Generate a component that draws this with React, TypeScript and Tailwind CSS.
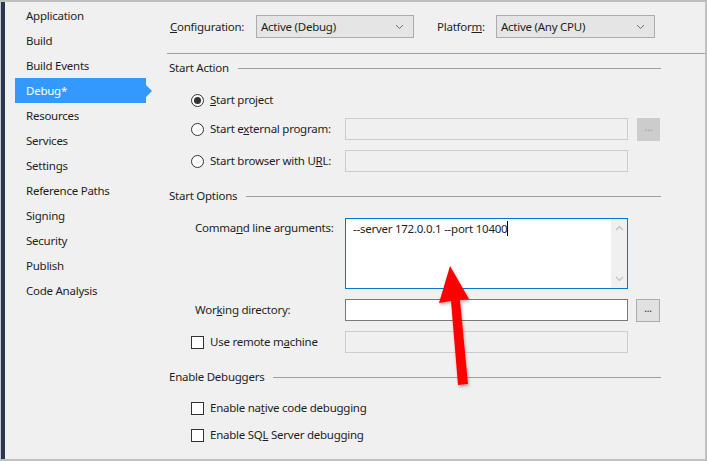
import React from 'react';

const navItems = [
  'Application',
  'Build',
  'Build Events',
  'Debug*',
  'Resources',
  'Services',
  'Settings',
  'Reference Paths',
  'Signing',
  'Security',
  'Publish',
  'Code Analysis',
];

const Radio = ({ checked }: { checked?: boolean }) => (
  <span className="w-[13px] h-[13px] rounded-full border border-[#333333] bg-white flex items-center justify-center shrink-0">
    {checked && <span className="w-[7px] h-[7px] rounded-full bg-[#333333]" />}
  </span>
);

const Checkbox = () => <span className="w-[13px] h-[13px] border border-[#333333] bg-white shrink-0" />;

const Dropdown = ({ value, width }: { value: string; width: string }) => (
  <div className={`${width} h-[23px] bg-[#e5e5e5] border border-[#acacac] flex items-center pl-[4px] pr-[9px]`}>
    <span className="flex-1">{value}</span>
    <svg width="9" height="6" viewBox="0 0 9 6" className="text-[#707070]">
      <path d="M1 1 L4.5 4.5 L8 1" fill="none" stroke="currentColor" strokeWidth="1" />
    </svg>
  </div>
);

const SectionHeader = ({ title, className }: { title: string; className: string }) => (
  <div className={`flex items-center h-[16px] pl-[9px] pr-[44px] ${className}`}>
    <span>{title}</span>
    <span className="flex-1 h-px bg-[#a0a0a0] ml-[9px]" />
  </div>
);

const DisabledInput = () => <div className="w-[283px] h-[22px] border border-[#cccccc] bg-[#f0f0f0] shrink-0" />;

export default function App() {
  return (
    <div
      className="relative w-[707px] h-[461px] bg-[#f0f0f0] border-t-2 border-r-2 border-b-2 border-[#c0c0c0] flex text-[11.5px] tracking-[-0.25px] whitespace-nowrap text-[#1e1e1e] overflow-hidden"
      style={{ fontFamily: '"Noto Sans", "Open Sans", sans-serif' }}
    >
      {/* left window edge */}
      <div className="w-px bg-[#c8c8c8]" />
      <div className="w-[4px] bg-[#2b3652]" />

      {/* sidebar */}
      <div className="w-[155px] pt-[1px] flex flex-col">
        {navItems.map((item) => {
          const active = item === 'Debug*';
          return (
            <div key={item} className="relative h-[25px] flex items-center">
              {active ? (
                <div className="relative ml-[10px] w-[131px] h-[25px] bg-[#3399ff] text-white flex items-center pl-[11px]">
                  {item}
                  <span className="absolute right-[-6px] top-[6.5px] w-0 h-0 border-y-[6px] border-y-transparent border-l-[6px] border-l-[#3399ff]" />
                </div>
              ) : (
                <span className="pl-[21px]">{item}</span>
              )}
            </div>
          );
        })}
      </div>

      {/* main pane */}
      <div className="flex-1 flex flex-col">
        <div className="flex items-start pt-[13px] pl-[10px] h-[51px]">
          <div className="flex items-center h-[23px]">
            <span className="w-[86px]">
              <u>C</u>onfiguration:
            </span>
            <Dropdown value="Active (Debug)" width="w-[158px]" />
            <span className="ml-[23px] w-[59px]">
              Platfor<u>m</u>:
            </span>
            <Dropdown value="Active (Any CPU)" width="w-[159px]" />
          </div>
        </div>
        <div className="ml-[7px] h-px bg-[#a0a0a0]" />

        <SectionHeader title="Start Action" className="mt-[6px]" />

        <div className="flex items-center h-[22px] mt-[13px] pl-[31px]">
          <div className="w-[154px] flex items-center gap-[6px]">
            <Radio checked />
            <span>
              <u>S</u>tart project
            </span>
          </div>
        </div>

        <div className="flex items-center h-[22px] mt-[7px] pl-[31px]">
          <div className="w-[154px] flex items-center gap-[6px]">
            <Radio />
            <span>
              Start e<u>x</u>ternal program:
            </span>
          </div>
          <DisabledInput />
          <div className="ml-[9px] w-[23px] h-[23px] bg-[#cccccc] flex items-center justify-center text-[#9a9a9a] text-[10px] pb-[3px]">
            ...
          </div>
        </div>

        <div className="flex items-center h-[22px] mt-[10px] pl-[31px]">
          <div className="w-[154px] flex items-center gap-[6px]">
            <Radio />
            <span>
              Start browser with U<u>R</u>L:
            </span>
          </div>
          <DisabledInput />
        </div>

        <SectionHeader title="Start Options" className="mt-[16px]" />

        <div className="flex items-start mt-[14px] pl-[35px]">
          <span className="w-[150px] pt-[1px]">
            Comma<u>n</u>d line arguments:
          </span>
          <div className="w-[283px] h-[71px] border border-[#0078d7] bg-white flex">
            <div className="flex-1 pl-[7px] pt-[1px] flex items-start">
              <span>--server 172.0.0.1 --port 10400</span>
              <span className="w-px h-[15px] bg-black mt-[1px]" />
            </div>
            <div className="w-[16px] bg-[#f0f0f0] flex flex-col items-center justify-between py-[6px] text-[#c0c0c0]">
              <svg width="9" height="6" viewBox="0 0 9 6">
                <path d="M1 5 L4.5 1.5 L8 5" fill="none" stroke="currentColor" strokeWidth="1.2" />
              </svg>
              <svg width="9" height="6" viewBox="0 0 9 6">
                <path d="M1 1 L4.5 4.5 L8 1" fill="none" stroke="currentColor" strokeWidth="1.2" />
              </svg>
            </div>
          </div>
        </div>

        <div className="flex items-center h-[22px] mt-[10px] pl-[35px]">
          <span className="w-[150px]">
            Wor<u>k</u>ing directory:
          </span>
          <div className="w-[283px] h-[22px] border border-[#7a7a7a] bg-white" />
          <div className="ml-[8px] w-[24px] h-[23px] bg-[#e1e1e1] border border-[#adadad] flex items-center justify-center text-[10px] pb-[3px]">
            ...
          </div>
        </div>

        <div className="flex items-center h-[22px] mt-[10px] pl-[31px]">
          <div className="w-[154px] flex items-center gap-[6px]">
            <Checkbox />
            <span>
              Use remote m<u>a</u>chine
            </span>
          </div>
          <DisabledInput />
        </div>

        <SectionHeader title="Enable Debuggers" className="mt-[16px]" />

        <div className="flex items-center h-[22px] mt-[12px] pl-[31px] gap-[6px]">
          <Checkbox />
          <span>
            Enable na<u>t</u>ive code debugging
          </span>
        </div>

        <div className="flex items-center h-[22px] mt-[5px] pl-[31px] gap-[6px]">
          <Checkbox />
          <span>
            Enable SQ<u>L</u> Server debugging
          </span>
        </div>
      </div>

      {/* annotation arrow */}
      <svg className="absolute left-0 top-[-2px] pointer-events-none" width="707" height="461" viewBox="0 0 707 461">
        <defs>
          <filter id="arrowShadow" x="-20%" y="-20%" width="140%" height="140%">
            <feDropShadow dx="1" dy="2" stdDeviation="1.5" floodColor="#000000" floodOpacity="0.3" />
          </filter>
        </defs>
        <polygon
          points="450,266 469,299 460,300 468,384 458,385 451,301 439,303"
          fill="#ff0000"
          filter="url(#arrowShadow)"
        />
      </svg>
    </div>
  );
}
